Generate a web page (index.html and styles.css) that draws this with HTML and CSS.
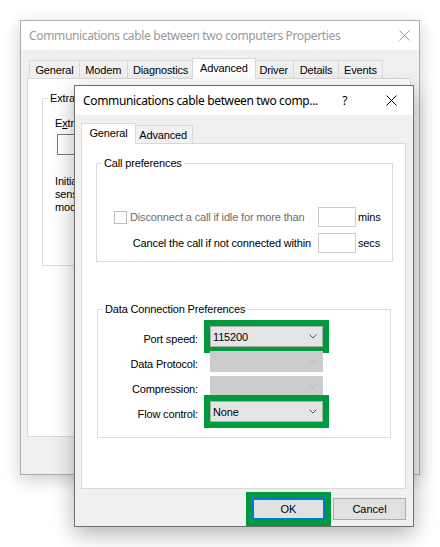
FILE: index.html
```html
<!DOCTYPE html>
<html>
<head>
<meta charset="utf-8">
<link rel="stylesheet" href="styles.css">
</head>
<body>
<div class="desk">
  <div class="win win-outer">
    <div class="titlebar">
      <span class="title">Communications cable between two computers Properties</span>
      <svg class="close" width="11" height="11" viewBox="0 0 11 11"><path d="M0.5 0.5L10.5 10.5M10.5 0.5L0.5 10.5" stroke="#9a9a9a" stroke-width="1" fill="none"/></svg>
    </div>
    <div class="body">
      <div class="tabs">
        <span class="tab">General</span>
        <span class="tab">Modem</span>
        <span class="tab">Diagnostics</span>
        <span class="tab sel">Advanced</span>
        <span class="tab">Driver</span>
        <span class="tab">Details</span>
        <span class="tab">Events</span>
      </div>
      <div class="panel panel-outer">
        <fieldset class="group group-extra">
          <legend>Extra Settings</legend>
          <div class="extra-body">
            <div class="extra-label">E<u>x</u>tra initialization commands:</div>
            <div class="textbox"></div>
            <p class="note">Initialization commands are not case-<br>sensitive. For details, consult your<br>modem documentation.</p>
          </div>
        </fieldset>
      </div>
    </div>
  </div>

  <div class="win win-inner">
    <div class="titlebar">
      <span class="title">Communications cable between two comp...</span>
      <span class="help">?</span>
      <svg class="close" width="11" height="11" viewBox="0 0 11 11"><path d="M0.5 0.5L10.5 10.5M10.5 0.5L0.5 10.5" stroke="#000" stroke-width="1" fill="none"/></svg>
    </div>
    <div class="body body-inner">
      <div class="tabs">
        <span class="tab sel">General</span>
        <span class="tab">Advanced</span>
      </div>
      <div class="panel panel-inner">
        <fieldset class="group group-call">
          <legend>Call preferences</legend>
          <div class="callgrid">
            <label class="check-row"><span class="checkbox"></span><span class="disabled-text">Disconnect a call if idle for more than</span></label>
            <span class="edit"></span>
            <span class="unit">mins</span>
            <span class="call-label">Cancel the call if not connected within</span>
            <span class="edit"></span>
            <span class="unit">secs</span>
          </div>
        </fieldset>
        <fieldset class="group group-data">
          <legend>Data Connection Preferences</legend>
          <div class="datagrid">
            <span class="dlabel">Port speed:</span>
            <div class="combo hl"><span>115200</span><svg width="8" height="5" viewBox="0 0 8 5"><path d="M0.5 0.5L4 4L7.5 0.5" stroke="#555" fill="none"/></svg></div>
            <span class="dlabel">Data Protocol:</span>
            <div class="combo dis"><span></span><svg width="8" height="5" viewBox="0 0 8 5"><path d="M0.5 0.5L4 4L7.5 0.5" stroke="#b9b9b9" fill="none"/></svg></div>
            <span class="dlabel">Compression:</span>
            <div class="combo dis"><span></span><svg width="8" height="5" viewBox="0 0 8 5"><path d="M0.5 0.5L4 4L7.5 0.5" stroke="#b9b9b9" fill="none"/></svg></div>
            <span class="dlabel">Flow control:</span>
            <div class="combo hl"><span>None</span><svg width="8" height="5" viewBox="0 0 8 5"><path d="M0.5 0.5L4 4L7.5 0.5" stroke="#555" fill="none"/></svg></div>
          </div>
        </fieldset>
      </div>
      <div class="actions">
        <button class="btn btn-default hl">OK</button>
        <button class="btn">Cancel</button>
      </div>
    </div>
  </div>
</div>
</body>
</html>
```

FILE: styles.css
```css
* { box-sizing: border-box; }
html, body { margin: 0; padding: 0; }
body {
  width: 440px;
  height: 547px;
  overflow: hidden;
  background: #fff;
  font-family: "Liberation Sans", Arial, sans-serif;
  font-size: 11px;
  letter-spacing: -0.15px;
  color: #000;
}
.desk { position: relative; width: 440px; height: 547px; }

.win {
  position: absolute;
  display: flex;
  flex-direction: column;
  background: #f0f0f0;
}
.win-outer {
  z-index: 1;
  left: 20px; top: 20px;
  width: 400px; height: 455px;
  border: 1px solid #acacac;
  box-shadow: 0 5px 16px rgba(0,0,0,0.2);
}
.win-inner {
  z-index: 2;
  left: 74px; top: 85px;
  width: 340px; height: 442px;
  border: 1px solid #6f6f6f;
  box-shadow: 0 7px 20px rgba(0,0,0,0.3);
}

.titlebar {
  flex: none;
  height: 29px;
  background: #fff;
  display: flex;
  align-items: center;
  padding-left: 8px;
  font-family: "Noto Sans", sans-serif;
  font-size: 12px;
  letter-spacing: -0.35px;
}
.titlebar .title { flex: 1; white-space: nowrap; }
.win-outer .titlebar { color: #999; padding-right: 9px; }
.win-inner .titlebar { padding-right: 16px; }
.close { display: block; flex: none; }
.help { margin-right: 39px; }

.body { flex: 1; padding: 8px 8px 0 6px; display: flex; flex-direction: column; }
.body-inner { padding: 8px 7px 0 6px; }

.tabs {
  display: flex;
  align-items: flex-end;
  height: 20px;
  padding-left: 2px;
  position: relative;
  z-index: 2;
}
.tab {
  height: 18px;
  line-height: 18px;
  padding: 0 5.4px;
  border: 1px solid #d9d9d9;
  border-bottom: 0;
  margin-right: -1px;
  background: #f0f0f0;
  white-space: nowrap;
}
.tab.sel {
  height: 21px;
  line-height: 18px;
  margin: 0 -3px -1px -2px;
  padding: 0 7.4px;
  background: #fff;
  position: relative;
  z-index: 3;
}

.panel {
  background: #fff;
  border: 1px solid #d9d9d9;
  position: relative;
  z-index: 1;
}
.panel-outer { height: 359px; }
.panel-inner { height: 346px; }

.group {
  margin: 0;
  padding: 0;
  min-width: 0;
  border: 1px solid #dcdcdc;
}
.group legend {
  padding: 0 2px;
  margin-left: 5px;
  line-height: 13px;
}

.group-extra {
  margin: 13px 14px 0 14px;
  height: 174px;
}
.extra-body { padding: 12px 0 0 12px; }
.extra-label { line-height: 13px; white-space: nowrap; }
.textbox {
  margin: 4px 0 0 2px;
  width: 200px;
  height: 21px;
  background: #fff;
  border: 1px solid #7a7a7a;
}
.note { margin: 20px 0 0; line-height: 13px; white-space: nowrap; }

.group-call { margin: 13px 12px 0 14px; }
.callgrid {
  display: grid;
  grid-template-columns: 198px 44px auto;
  row-gap: 6px;
  align-items: center;
  padding: 37px 0 8px 17px;
}
.check-row { display: flex; align-items: center; gap: 3px; white-space: nowrap; }
.checkbox {
  width: 13px; height: 13px;
  border: 1px solid #bcbcbc;
  background: #fff;
  flex: none;
}
.disabled-text { color: #6d6d6d; }
.call-label { text-align: right; padding-right: 1px; white-space: nowrap; }
.edit {
  width: 38px; height: 20px;
  margin-left: 6px;
  border: 1px solid #cccccc;
  background: #fff;
}
.unit { padding-left: 2px; }

.group-data { margin: 41px 14px 0 15px; }
.datagrid {
  display: grid;
  grid-template-columns: 100px 113px;
  column-gap: 12px;
  row-gap: 4px;
  align-items: center;
  padding: 10px 0 15px 0;
}
.dlabel { text-align: right; padding-top: 6px; line-height: 13px; white-space: nowrap; }
.combo {
  height: 21px;
  border: 1px solid #adadad;
  background: #e5e5e5;
  display: flex;
  align-items: center;
  justify-content: space-between;
  padding: 0 5px 0 2px;
}
.combo svg { display: block; }
.combo.dis { background: #cccccc; border-color: #cccccc; }

.hl { outline: 6px solid #009a3e; }

.actions {
  display: flex;
  justify-content: flex-end;
  gap: 8px;
  margin-top: 9px;
  padding-right: 0;
}
.btn {
  width: 73px;
  height: 22px;
  margin: 0;
  padding: 0;
  border: 1px solid #adadad;
  background: #e1e1e1;
  font-family: "Liberation Sans", Arial, sans-serif;
  font-size: 11px;
  color: #000;
}
.btn-default { border: 2px solid #0078d7; }
```
